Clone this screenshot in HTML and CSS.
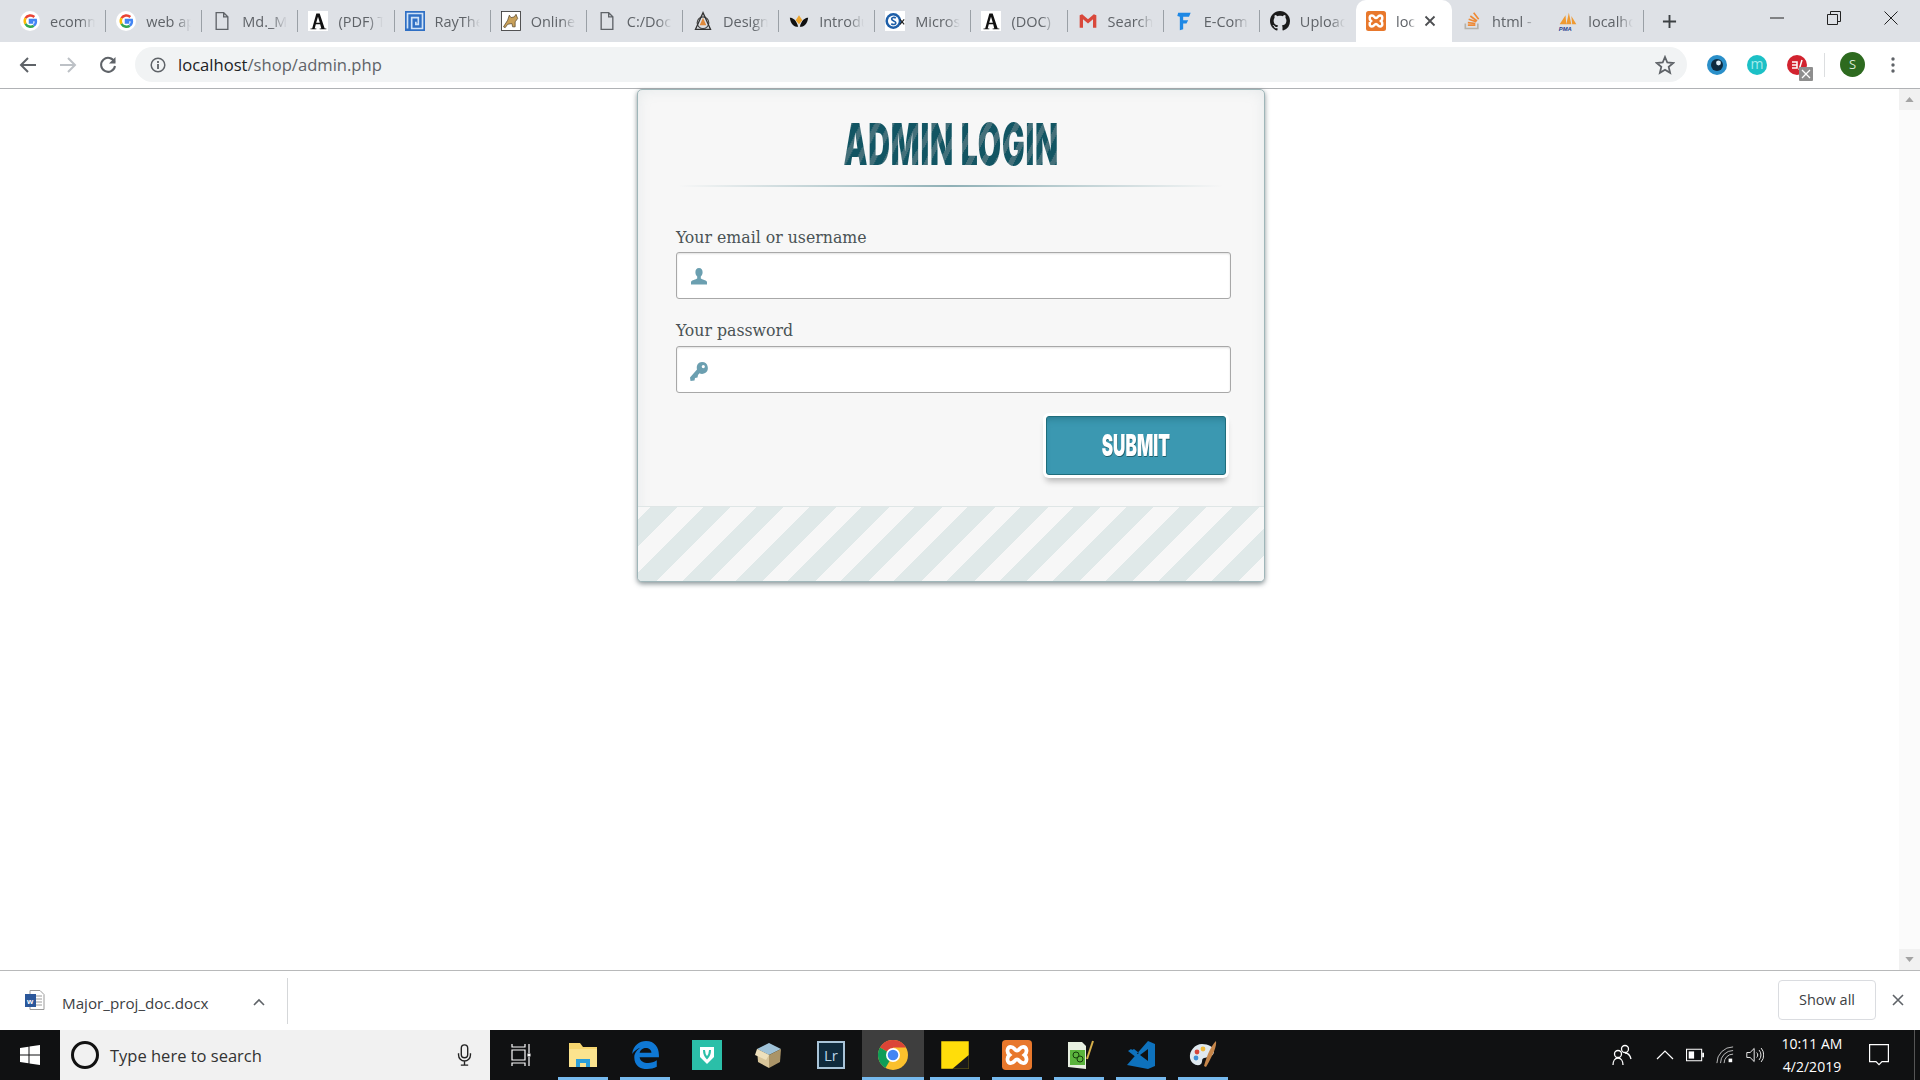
FILE: index.html
```html
<!DOCTYPE html>
<html>
    <head>
        <title>Admin Login</title>
        <link rel="stylesheet" href="styles.css">
    </head>
    <body>
        <svg class="defs" width="0" height="0">
            <symbol id="i-g" viewBox="0 0 24 24">
                <circle cx="12" cy="12" r="12" fill="#fff"/>
                <path d="M17.2 7.2A7 7 0 0 0 6.6 8.6" fill="none" stroke="#ea4335" stroke-width="3"/>
                <path d="M6.6 8.6a7 7 0 0 0 0 6.8" fill="none" stroke="#fbbc05" stroke-width="3"/>
                <path d="M6.6 15.4a7 7 0 0 0 10 2.2" fill="none" stroke="#34a853" stroke-width="3"/>
                <path d="M16.6 17.6a7 7 0 0 0 2.3-6.8H12v3h4" fill="none" stroke="#4285f4" stroke-width="3"/>
            </symbol>
            <symbol id="i-doc" viewBox="0 0 24 24">
                <path d="M5 2h9l5 5v15H5z M14 2v5h5" fill="none" stroke="#5f6368" stroke-width="1.6"/>
            </symbol>
            <symbol id="i-a" viewBox="0 0 24 24">
                <rect width="24" height="24" fill="#fff"/>
                <path d="M10 3h4l6 18h2v1h-8v-1h2l-1.400-5H9.400L8 21h2v1H3v-1h2zM12 7l-2.200 7h4.400z" fill="#111"/>
            </symbol>
            <symbol id="i-xampp" viewBox="0 0 24 24">
                <rect width="24" height="24" rx="3" fill="#e8782c"/>
                <path d="M7 5.500c3 0 3 3 5 3s2-3 5-3 3.500 4.500 1 6.500c2.500 2 2 6.500-1 6.500s-3-3-5-3-2 3-5 3-3.500-4.500-1-6.500c-2.500-2-2-6.500 1-6.500z" fill="none" stroke="#fff" stroke-width="3"/>
            </symbol>
        </svg>

        <div class="tabstrip">
            <div class="tab"><svg class="fav"><use href="#i-g"/></svg><span class="tab-title">ecomm</span></div>
            <div class="tab"><svg class="fav"><use href="#i-g"/></svg><span class="tab-title">web ap</span></div>
            <div class="tab"><svg class="fav"><use href="#i-doc"/></svg><span class="tab-title">Md._M</span></div>
            <div class="tab"><svg class="fav"><use href="#i-a"/></svg><span class="tab-title">(PDF) T</span></div>
            <div class="tab">
                <svg class="fav" viewBox="0 0 24 24"><rect width="24" height="24" fill="#2f6fc4"/><path d="M3 21V3h18v18H8V8h8v8h-3v-3" fill="none" stroke="#cfe2f7" stroke-width="2"/></svg>
                <span class="tab-title">RayThe</span>
            </div>
            <div class="tab">
                <svg class="fav" viewBox="0 0 24 24"><rect x=".5" y=".5" width="23" height="23" fill="#fff" stroke="#333"/><path d="M3 19l5-8 2-6 2 3 4-1 2-3 2 5-3 4v6h-3l-1-4-5 1-3 4z" fill="#c9a15a" stroke="#4a3a20" stroke-width=".8"/></svg>
                <span class="tab-title">Online</span>
            </div>
            <div class="tab"><svg class="fav"><use href="#i-doc"/></svg><span class="tab-title">C:/Doc</span></div>
            <div class="tab">
                <svg class="fav" viewBox="0 0 24 24"><circle cx="12" cy="14" r="7" fill="none" stroke="#444" stroke-width="1.400"/><path d="M12 2L3 22h18z" fill="none" stroke="#333" stroke-width="1.600"/><path d="M12 8l4 9H8z" fill="#e08a3c"/></svg>
                <span class="tab-title">Design</span>
            </div>
            <div class="tab">
                <svg class="fav" viewBox="0 0 24 24"><path d="M1 8c4 0 8 3 10 11-5 0-9-3-10-11zM23 8c-4 0-8 3-10 11 5 0 9-3 10-11z" fill="#111"/><path d="M12 5l4 6-4 5-4-5z" fill="#eda52c"/></svg>
                <span class="tab-title">Introdu</span>
            </div>
            <div class="tab">
                <svg class="fav" viewBox="0 0 24 24"><rect width="24" height="24" fill="#fff"/><circle cx="10" cy="12" r="9.500" fill="#1d5ea8"/><circle cx="10" cy="12" r="6.500" fill="#fff"/><path d="M13 8.500c-2-1.500-5-.8-5 1.200 0 2.500 5 2 5 4.600 0 2-3 2.500-5.500 1" fill="none" stroke="#1d5ea8" stroke-width="2"/><path d="M18 10l5 6m0-6l-5 6" stroke="#222" stroke-width="1.400"/></svg>
                <span class="tab-title">Micros</span>
            </div>
            <div class="tab"><svg class="fav"><use href="#i-a"/></svg><span class="tab-title">(DOC) I</span></div>
            <div class="tab">
                <svg class="fav" viewBox="0 0 24 24"><path d="M2 5v15h4V10l6 5 6-5v10h4V5l-3-1-7 6-7-6z" fill="#d9483b"/></svg>
                <span class="tab-title">Search</span>
            </div>
            <div class="tab">
                <svg class="fav" viewBox="0 0 24 24"><path d="M5 2h15l-2 5h-7v4h6l-2 4h-4v7l-4 1V7L4 6z" fill="#1e88e5"/></svg>
                <span class="tab-title">E-Com</span>
            </div>
            <div class="tab">
                <svg class="fav" viewBox="0 0 16 16"><path d="M8 0C3.580 0 0 3.580 0 8c0 3.540 2.290 6.530 5.470 7.590.4.070.55-.17.55-.38 0-.19-.01-.82-.01-1.490-2.010.37-2.530-.49-2.690-.94-.09-.23-.48-.94-.82-1.130-.28-.15-.68-.52-.01-.53.63-.01 1.080.58 1.230.82.72 1.210 1.870.87 2.330.66.07-.52.28-.87.51-1.070-1.780-.2-3.640-.89-3.640-3.950 0-.87.31-1.590.82-2.150-.08-.2-.36-1.020.08-2.120 0 0 .67-.21 2.200.82.64-.18 1.320-.27 2-.27.68 0 1.360.09 2 .27 1.530-1.040 2.200-.82 2.200-.82.44 1.100.16 1.920.08 2.120.51.56.82 1.270.82 2.150 0 3.070-1.870 3.750-3.650 3.950.29.25.54.73.54 1.480 0 1.070-.01 1.930-.01 2.200 0 .21.15.46.55.38A8.013 8.013 0 0 0 16 8c0-4.420-3.580-8-8-8z" fill="#1b1b1b"/></svg>
                <span class="tab-title">Upload</span>
            </div>
            <div class="tab tab-active">
                <svg class="fav"><use href="#i-xampp"/></svg><span class="tab-title">loc</span>
                <svg class="tab-close" viewBox="0 0 12 12"><path d="M1.500 1.500l9 9m0-9l-9 9" stroke="#4d4f52" stroke-width="1.800"/></svg>
            </div>
            <div class="tab">
                <svg class="fav" viewBox="0 0 24 24"><path d="M4 15v6h15v-6" fill="none" stroke="#b5b2aa" stroke-width="2"/><path d="M7 17h9M7 14l9 1M8 10l9 3M10 6l8 6M14 2l6 8" stroke="#ee8a36" stroke-width="2"/></svg>
                <span class="tab-title">html -</span>
            </div>
            <div class="tab">
                <svg class="fav" viewBox="0 0 24 24"><path d="M2 16L9 5l1 11zM10 16l3-14 3 14zM17 16L16 6l6 10z" fill="#ef9a32"/><text x="1" y="23.500" class="pma">PMA</text></svg>
                <span class="tab-title">localho</span>
            </div>
            <svg class="newtab" viewBox="0 0 16 16"><path d="M8 1v14M1 8h14" stroke="#3c4043" stroke-width="2"/></svg>
            <div class="winctl">
                <svg viewBox="0 0 14 14"><path d="M0 7h14" stroke="#222"/></svg>
                <svg viewBox="0 0 14 14"><path d="M.5 3.500h10v10H.5zM3.500 3.500v-3h10v10h-3" fill="none" stroke="#222"/></svg>
                <svg viewBox="0 0 14 14"><path d="M.5.5l13 13m0-13l-13 13" stroke="#222"/></svg>
            </div>
        </div>

        <div class="toolbar">
            <svg class="nav" viewBox="0 0 18 18"><path d="M17 9H2M9 2L2 9l7 7" fill="none" stroke="#5f6368" stroke-width="2"/></svg>
            <svg class="nav" viewBox="0 0 18 18"><path d="M1 9h15M9 2l7 7-7 7" fill="none" stroke="#bdc1c6" stroke-width="2"/></svg>
            <svg class="nav" viewBox="0 0 18 18"><path d="M15.500 6A7 7 0 1 0 16 10" fill="none" stroke="#5f6368" stroke-width="2"/><path d="M16.500 1v6.500H10z" fill="#5f6368"/></svg>
            <div class="omnibox">
                <svg class="info" viewBox="0 0 16 16"><circle cx="8" cy="8" r="6.800" fill="none" stroke="#5f6368" stroke-width="1.500"/><path d="M8 7v5M8 4v2" stroke="#5f6368" stroke-width="1.800"/></svg>
                <span class="url">localhost<span class="url-path">/shop/admin.php</span></span>
                <svg class="star" viewBox="0 0 20 20"><path d="M10 2l2.300 5.500 6 .5-4.600 3.900 1.400 5.900L10 14.700l-5.100 3.100 1.400-5.900L1.700 8l6-.5z" fill="none" stroke="#5f6368" stroke-width="1.800"/></svg>
            </div>
            <div class="ext">
                <svg viewBox="0 0 20 20"><circle cx="10" cy="10" r="10" fill="#2a8fc9"/><circle cx="10" cy="10" r="6" fill="#0e2a3f"/><circle cx="11.500" cy="8" r="2.400" fill="#dfeef7"/></svg>
            </div>
            <div class="ext"><span class="ext-m">m</span></div>
            <div class="ext ext-red">
                <svg viewBox="0 0 20 20"><circle cx="10" cy="10" r="10" fill="#d2232f"/><path d="M5 7h5v6H5M5 10h5M15 5l-3 10" fill="none" stroke="#fff" stroke-width="1.500"/></svg>
                <svg class="ext-badge" viewBox="0 0 14 14"><rect width="14" height="14" rx="1" fill="#8e8e8e"/><path d="M3 3l8 8m0-8l-8 8" stroke="#fff" stroke-width="1.300"/></svg>
            </div>
            <div class="tool-sep"></div>
            <div class="avatar">S</div>
            <svg class="kebab" viewBox="0 0 4 18"><circle cx="2" cy="3" r="1.700"/><circle cx="2" cy="9" r="1.700"/><circle cx="2" cy="15" r="1.700"/></svg>
        </div>

        <div class="main">
            <div class="page">
                <div class="card">
                    <h1 class="card-title"><span>ADMIN LOGIN</span></h1>
                    <div class="card-rule"></div>
                    <form class="login" onsubmit="return false;">
                        <label class="field-label" for="email">Your email or username</label>
                        <div class="field">
                            <svg class="field-icon" viewBox="0 0 20 20"><path d="M10 1c2.400 0 3.600 2 3.600 4.200 0 2-1 3.600-1.800 4.300v2c1 1 5.700 1.500 6.200 3.500v2.500H2V15c.5-2 5.200-2.500 6.200-3.500v-2C7.400 8.800 6.400 7.200 6.400 5.200 6.400 3 7.600 1 10 1z"/></svg>
                            <input id="email" type="text">
                        </div>
                        <label class="field-label" for="password">Your password</label>
                        <div class="field">
                            <svg class="field-icon" viewBox="0 0 20 20"><path d="M13 1a6 6 0 0 1 2 11.600c-2 .6-3.500.2-4.500-.4L9 14l-.5 2.500-2.500.5-.5 2.500L1.500 20 1 16.500 8 8.500C7 4 9.500 1 13 1zm1.300 3a1.600 1.600 0 1 0 0 3.200 1.600 1.600 0 0 0 0-3.200z" fill-rule="evenodd"/></svg>
                            <input id="password" type="password">
                        </div>
                        <div class="submit-row">
                            <button class="submit" type="submit"><span>SUBMIT</span></button>
                        </div>
                    </form>
                    <div class="card-stripes"></div>
                </div>
            </div>
            <div class="scrollbar">
                <div class="scroll-btn"><svg viewBox="0 0 10 6"><path d="M0 6l5-6 5 6z"/></svg></div>
                <div class="scroll-btn"><svg viewBox="0 0 10 6"><path d="M0 0l5 6 5-6z"/></svg></div>
            </div>
        </div>

        <div class="downloads">
            <svg class="word" viewBox="0 0 20 20"><path d="M5 .5h10l4 4v15H5z" fill="#fff" stroke="#9a9a9a"/><path d="M10 6h7M10 9h7M10 12h7M10 15h7" stroke="#9a9a9a"/><rect y="4" width="11" height="13" fill="#2b579a"/><text x="2" y="13.500" class="word-w">w</text></svg>
            <span class="dl-name">Major_proj_doc.docx</span>
            <svg class="dl-chevron" viewBox="0 0 12 8"><path d="M1 7l5-5 5 5" fill="none" stroke="#5f6368" stroke-width="1.600"/></svg>
            <div class="dl-sep"></div>
            <div class="show-all">Show all</div>
            <svg class="dl-close" viewBox="0 0 12 12"><path d="M1 1l10 10m0-10L1 11" stroke="#5f6368" stroke-width="1.600"/></svg>
        </div>

        <div class="taskbar">
            <div class="start">
                <svg viewBox="0 0 20 20"><path d="M0 3l8.500-1.200v7.700H0zM9.500 1.600L20 0v9.500H9.500zM0 10.500h8.500v7.700L0 17zM9.500 10.500H20V20L9.500 18.400z" fill="#fff"/></svg>
            </div>
            <div class="search">
                <span class="cortana"></span>
                <span class="search-text">Type here to search</span>
                <svg class="mic" viewBox="0 0 16 24"><rect x="4.500" y="1" width="7" height="14" rx="3.500" fill="none" stroke="#222" stroke-width="1.500"/><path d="M1.500 10v2a6.500 6.500 0 0 0 13 0v-2M8 18.500V23M4 23h8" fill="none" stroke="#222" stroke-width="1.500"/></svg>
            </div>
            <div class="taskview">
                <svg viewBox="0 0 20 24"><path d="M1 1v3h13V1M1 23v-3h13v3M1 7h13v10H1zM18 1v9M18 14v9" fill="none" stroke="#fff" stroke-width="1.200"/><rect x="16.500" y="10.500" width="3" height="3" fill="#fff"/></svg>
            </div>
            <div class="apps">
                <div class="app app-open">
                    <svg viewBox="0 0 30 28"><path d="M1 2h11l3 4h14v20H1z" fill="#f6d66f"/><rect x="1" y="8" width="28" height="18" fill="#fbe38e"/><path d="M8 26v-8h14v8h-4v-4h-6v4z" fill="#2c9fd9"/></svg>
                </div>
                <div class="app app-open">
                    <svg viewBox="0 0 28 28"><path d="M2 13C3 5 9 1 15 1c8 0 12 6 12 13v2H9c.5 6 10 7 16 3v6c-8 4-21 3-21-9 0-4 3-7 6-9-3 1-6 3-8 6zm7-1h11c0-6-10-6-11 0z" fill="#0f78d4"/></svg>
                </div>
                <div class="app">
                    <svg viewBox="0 0 30 30"><rect width="30" height="30" fill="#2bbfa8"/><path d="M8 7h14v10l-7 7-7-7z" fill="#fff"/><path d="M12 10c0 4 1 6 3 8 2-2 3-4 3-8" fill="none" stroke="#2bbfa8" stroke-width="2"/></svg>
                </div>
                <div class="app">
                    <svg viewBox="0 0 30 30"><path d="M3 9l12-6 12 6-12 6z" fill="#9fc2d8"/><path d="M3 9l12 6v13L4 22z" fill="#d8c59a"/><path d="M27 9l-12 6v13l11-6z" fill="#aa9468"/><path d="M3 9l-2 6 11 5 3-5z" fill="#eee0bc"/></svg>
                </div>
                <div class="app">
                    <div class="lr">Lr</div>
                </div>
                <div class="app app-active">
                    <svg viewBox="0 0 30 30"><circle cx="15" cy="15" r="15" fill="#fbc02d"/><path d="M15 15L2 7.500A15 15 0 0 1 28 7.500H15z" fill="#db4437"/><path d="M15 15l-7.500 13A15 15 0 0 1 2 7.500z" fill="#0f9d58"/><circle cx="15" cy="15" r="7" fill="#fff"/><circle cx="15" cy="15" r="5.300" fill="#4285f4"/></svg>
                </div>
                <div class="app app-open">
                    <svg viewBox="0 0 24 24"><rect x="1" y="1" width="22" height="22" fill="#ffdd0a"/><path d="M23 12v11H10z" fill="#1a1a1a"/></svg>
                </div>
                <div class="app app-open"><svg><use href="#i-xampp"/></svg></div>
                <div class="app app-open">
                    <svg viewBox="0 0 30 30"><path d="M4 2h14l4 4v23l-18-2z" fill="#e7efe0"/><rect x="6" y="10" width="15" height="15" fill="#5ab43c"/><circle cx="12" cy="15" r="3" fill="none" stroke="#163d0b"/><circle cx="16" cy="19" r="3" fill="none" stroke="#163d0b"/><path d="M29 1l-6 18" stroke="#d7b04a" stroke-width="2"/></svg>
                </div>
                <div class="app app-open">
                    <svg viewBox="0 0 30 30"><path d="M22 1l7 3v22l-7 3L1 25zM22 9l-8 6 8 6z M4 11l4-2 5 4-3 2z" fill="#0e72bd" fill-rule="evenodd"/><path d="M2 11l3-2 9 7-3 2z" fill="#0e72bd"/></svg>
                </div>
                <div class="app app-open">
                    <svg viewBox="0 0 30 30"><path d="M14 4C7 4 1 11 2 18c1 6 8 9 11 6 2-2 0-5 3-6 4-1 9-1 10-6 1-5-6-8-12-8z" fill="#dfe8ee"/><circle cx="9" cy="12" r="2.400" fill="#d6453a"/><circle cx="15" cy="9" r="2.400" fill="#f0b93a"/><circle cx="8" cy="18" r="2.400" fill="#3f8fd6"/><path d="M28 1c1 5-3 14-10 26l-2-1C19 15 23 6 28 1z" fill="#c6864a"/></svg>
                </div>
            </div>
            <div class="tray">
                <svg class="tray-people" viewBox="0 0 20 22"><circle cx="13" cy="5" r="3.500" fill="none" stroke="#fff" stroke-width="1.300"/><circle cx="6" cy="10" r="3.500" fill="none" stroke="#fff" stroke-width="1.300"/><path d="M1 21c0-4 2-7 5-7s5 3 5 7M13 9c3 0 5 2 6 6" fill="none" stroke="#fff" stroke-width="1.300"/></svg>
                <div class="tray-slot"><svg viewBox="0 0 18 10"><path d="M1 9l8-8 8 8" fill="none" stroke="#fff" stroke-width="1.200"/></svg></div>
                <div class="tray-slot"><svg viewBox="0 0 20 14"><path d="M.6.6h16.800v12.800H.6z" fill="none" stroke="#fff" stroke-width="1.200"/><rect x="3" y="3" width="6" height="8" fill="#fff"/><rect x="18" y="4.500" width="2" height="5" fill="#fff"/></svg></div>
                <div class="tray-slot"><svg viewBox="0 0 20 20"><path d="M1 19A18 18 0 0 1 19 1M5 19A14 14 0 0 1 19 5M9 19A10 10 0 0 1 19 9" fill="none" stroke="#ccc"/><rect x="14" y="14" width="4" height="4" fill="#fff"/></svg></div>
                <div class="tray-slot"><svg viewBox="0 0 22 20"><path d="M1 7h4l5-5v16l-5-5H1z" fill="none" stroke="#fff" stroke-width="1.100"/><path d="M13 7a4 4 0 0 1 0 6M16 4a9 9 0 0 1 0 12M18.500 1.500a13 13 0 0 1 0 17" fill="none" stroke="#fff" stroke-width="1.100"/></svg></div>
                <div class="clock"><div>10:11 AM</div><div>4/2/2019</div></div>
                <div class="action">
                    <svg viewBox="0 0 20 22"><path d="M.6.6h18.800v17H13l-3 3-3-3H.6z" fill="none" stroke="#fff" stroke-width="1.200"/></svg>
                </div>
                <div class="peek"></div>
            </div>
        </div>
    </body>
</html>
```

FILE: styles.css
```css
html, body {
    margin: 0;
    height: 100%;
}
body {
    display: flex;
    flex-direction: column;
    height: 1080px;
    overflow: hidden;
    background: white;
    font-family: "Open Sans", "Noto Sans", sans-serif;
}
.defs {
    position: absolute;
}

/* browser chrome */
.tabstrip {
    display: flex;
    align-items: center;
    flex: none;
    height: 42px;
    padding-left: 10px;
    background: #dee1e6;
}
.tab {
    display: flex;
    align-items: center;
    flex: none;
    box-sizing: border-box;
    width: 96.150px;
    height: 42px;
    padding-left: 10px;
    position: relative;
}
.tab::after {
    content: "";
    position: absolute;
    right: 0;
    top: 10px;
    height: 22px;
    width: 1px;
    background: #9aa0a6;
}
.tab-active {
    height: 42px;
    background: white;
    border-radius: 10px 10px 0 0;
}
.tab-active::after, .tab:nth-child(14)::after, .tab:nth-child(16)::after {
    display: none;
}
.fav {
    flex: none;
    width: 20px;
    height: 20px;
    margin-right: 10px;
}
.tab-title {
    width: 46px;
    overflow: hidden;
    white-space: nowrap;
    font-size: 14.500px;
    color: #5f6368;
    -webkit-mask-image: linear-gradient(to right, black 65%, transparent 98%);
    mask-image: linear-gradient(to right, black 65%, transparent 98%);
}
.tab-active .tab-title {
    width: 20px;
}
.tab-close {
    width: 12px;
    height: 12px;
    margin-left: 8px;
}
.pma {
    font: italic bold 7px "Liberation Sans", sans-serif;
    fill: #23408f;
}
.newtab {
    width: 15px;
    height: 15px;
    margin-left: 18px;
}
.winctl {
    display: flex;
    align-items: center;
    gap: 43px;
    margin-left: auto;
    margin-right: 22px;
    padding-bottom: 7px;
}
.winctl svg {
    width: 14px;
    height: 14px;
}

.toolbar {
    display: flex;
    align-items: center;
    flex: none;
    box-sizing: border-box;
    height: 47px;
    padding: 0 0 1px 19px;
    background: white;
    border-bottom: 1px solid #b0b2b5;
}
.nav {
    flex: none;
    width: 18px;
    height: 18px;
    margin-right: 22px;
}
.omnibox {
    display: flex;
    align-items: center;
    box-sizing: border-box;
    width: 1552px;
    height: 35px;
    margin-left: -4px;
    padding: 0 10px 0 15px;
    background: #f1f3f4;
    border-radius: 18px;
}
.info {
    width: 16px;
    height: 16px;
    margin-right: 12px;
}
.url {
    flex: 1;
    font-size: 16.600px;
    color: #202124;
}
.url-path {
    color: #5f6368;
}
.star {
    width: 20px;
    height: 20px;
    margin-right: 2px;
}
.ext {
    position: relative;
    flex: none;
    width: 20px;
    height: 20px;
    margin-left: 20px;
}
.ext:first-of-type {
    margin-left: 18px;
}
.ext svg {
    display: block;
}
.ext-m {
    display: block;
    width: 20px;
    height: 20px;
    line-height: 18px;
    border-radius: 50%;
    background: #1cc0c6;
    color: #a4ecec;
    font-size: 14px;
    text-align: center;
}
.ext-badge {
    position: absolute;
    right: -6px;
    bottom: -6px;
    width: 14px;
    height: 14px;
}
.tool-sep {
    flex: none;
    width: 1px;
    height: 24px;
    margin-left: 17px;
    background: #dcdee0;
}
.avatar {
    flex: none;
    width: 25px;
    height: 25px;
    margin-left: 15px;
    border-radius: 50%;
    background: #2d6a1f;
    color: #d9e8d4;
    font-size: 13px;
    line-height: 25px;
    text-align: center;
}
.kebab {
    flex: none;
    width: 4px;
    height: 18px;
    margin-left: 26px;
    fill: #5f6368;
}

/* page */
.main {
    display: flex;
    flex: 1;
    min-height: 0;
}
.page {
    flex: 1;
    display: flex;
    justify-content: center;
    align-items: flex-start;
    padding-left: 3px;
}
.scrollbar {
    display: flex;
    flex-direction: column;
    justify-content: space-between;
    flex: none;
    width: 21px;
    background: #fbfbfb;
}
.scroll-btn {
    display: flex;
    align-items: center;
    justify-content: center;
    height: 21px;
    background: #f1f1f1;
}
.scroll-btn svg {
    width: 9px;
    height: 5px;
    fill: #a3a3a3;
}
.card {
    box-sizing: border-box;
    width: 628px;
    background: #f7f7f7;
    border: 1px solid #9fb6b9;
    border-radius: 5px;
    box-shadow: 0 2px 5px rgba(40, 60, 65, 0.55), inset 0 0 14px rgba(130, 155, 160, 0.14);
    overflow: hidden;
}
.card-title {
    margin: 0;
    padding-top: 25px;
    text-align: center;
    font: 900 58px/58px Inter, "Liberation Sans", sans-serif;
}
.card-title span {
    display: inline-block;
    transform: scaleX(0.52);
    letter-spacing: 1.500px;
    background: repeating-linear-gradient(-45deg, #125563 0 11px, #44707a 11px 19px);
    -webkit-background-clip: text;
    background-clip: text;
    color: transparent;
}
.card-rule {
    height: 2px;
    width: 545px;
    margin: 12px 0 0 40px;
    background: linear-gradient(to right, transparent, #8fb0b6 50%, transparent);
}
.login {
    padding: 39px 33px 31px 38px;
}
.field-label {
    display: block;
    height: 22px;
    margin-bottom: 4px;
    font: 17.500px/22px "DejaVu Serif Condensed", "DejaVu Serif", serif;
    color: #4a5355;
}
.field {
    position: relative;
    margin-bottom: 20px;
}
.field + .field-label {
    margin-bottom: 5px;
}
.field input {
    display: block;
    box-sizing: border-box;
    width: 100%;
    height: 47px;
    padding: 0 0 0 46px;
    background: white;
    border: 1px solid #a8a8a8;
    border-radius: 3px;
    box-shadow: inset 0 1px 2px rgba(0, 0, 0, 0.12);
    outline: none;
}
.field-icon {
    position: absolute;
    left: 13px;
    top: 15px;
    width: 20px;
    height: 20px;
    fill: #6b9fb0;
}
.submit-row {
    display: flex;
    justify-content: flex-end;
    margin-top: 23px;
    padding-right: 5px;
}
.submit {
    width: 180px;
    height: 59px;
    padding: 0 0 2px;
    background: #3b98b1;
    border: 1px solid #1f6d7c;
    border-radius: 3px;
    box-shadow: 0 0 0 3px white, 0 6px 6px rgba(0, 0, 0, 0.28), inset 0 6px 8px -6px rgba(20, 80, 95, 0.6);
    color: white;
    font: 900 30px/30px Inter, "Liberation Sans", sans-serif;
    text-shadow: 1px 1px 0 #1f5f6d;
}
.submit span {
    display: inline-block;
    transform: scaleX(0.57);
}
.card-stripes {
    height: 74px;
    border-top: 1px solid #dfe6e6;
    background: repeating-linear-gradient(-45deg, #f7f7f7 0 18px, #e0e9e9 18px 37.400px);
}

/* download shelf */
.downloads {
    display: flex;
    align-items: center;
    flex: none;
    box-sizing: border-box;
    height: 60px;
    padding-left: 25px;
    background: white;
    border-top: 1px solid #b8b9ba;
}
.word {
    flex: none;
    width: 20px;
    height: 20px;
    margin: -1px 17px 0 0;
}
.word-w {
    font: bold 8px "Liberation Sans", sans-serif;
    fill: white;
}
.dl-name {
    width: 191px;
    margin-top: 4px;
    font-size: 15.200px;
    color: #3c4043;
}
.dl-chevron {
    width: 12px;
    height: 8px;
    margin-top: 2px;
}
.dl-sep {
    width: 1px;
    height: 46px;
    margin-left: 22px;
    background: #d5d7d9;
}
.show-all {
    box-sizing: border-box;
    width: 98px;
    height: 40px;
    margin: -1px 0 0 auto;
    border: 1px solid #dadce0;
    border-radius: 4px;
    color: #3c4043;
    font-size: 14.500px;
    line-height: 38px;
    text-align: center;
}
.dl-close {
    width: 12px;
    height: 12px;
    margin: -1px 16px 0 16px;
}

/* windows taskbar */
.taskbar {
    display: flex;
    flex: none;
    height: 50px;
    background: #101112;
}
.start {
    display: flex;
    align-items: center;
    justify-content: center;
    width: 60px;
}
.start svg {
    width: 20px;
    height: 20px;
}
.search {
    display: flex;
    align-items: center;
    box-sizing: border-box;
    width: 430px;
    padding-left: 11px;
    background: #f1f1f1;
}
.cortana {
    flex: none;
    box-sizing: border-box;
    width: 28px;
    height: 28px;
    margin-right: 11px;
    border: 3.500px solid #111;
    border-radius: 50%;
}
.search-text {
    flex: 1;
    font-size: 16.500px;
    color: #333;
}
.mic {
    width: 15px;
    height: 22px;
    margin-right: 18px;
}
.taskview {
    display: flex;
    align-items: center;
    justify-content: center;
    width: 62px;
}
.taskview svg {
    width: 20px;
    height: 24px;
}
.apps {
    display: flex;
}
.app {
    display: flex;
    align-items: center;
    justify-content: center;
    position: relative;
    width: 62px;
}
.app svg {
    width: 30px;
    height: 30px;
}
.app-open::after, .app-active::after {
    content: "";
    position: absolute;
    left: 6px;
    right: 6px;
    bottom: 0;
    height: 3px;
    background: #76b9ed;
}
.app-active {
    background: #3e3e3e;
}
.app-active::after {
    left: 0;
    right: 0;
}
.lr {
    box-sizing: border-box;
    width: 28px;
    height: 28px;
    background: #0f2a3c;
    border: 2px solid #a9c4d8;
    color: #b8d4e8;
    font: 15px/24px "Open Sans", sans-serif;
    text-align: center;
}
.tray {
    display: flex;
    align-items: center;
    margin-left: auto;
    height: 50px;
}
.tray-people {
    width: 20px;
    height: 22px;
    margin-right: 18px;
}
.tray-slot {
    display: flex;
    align-items: center;
    justify-content: center;
    width: 30px;
}
.tray-slot svg {
    width: 18px;
    height: 18px;
}
.clock {
    width: 84px;
    color: white;
    font-size: 14px;
    line-height: 23px;
    text-align: center;
}
.action {
    display: flex;
    justify-content: center;
    width: 50px;
}
.action svg {
    width: 20px;
    height: 22px;
}
.peek {
    align-self: stretch;
    width: 1px;
    margin: 0 5px 0 10px;
    background: #555;
}
```
